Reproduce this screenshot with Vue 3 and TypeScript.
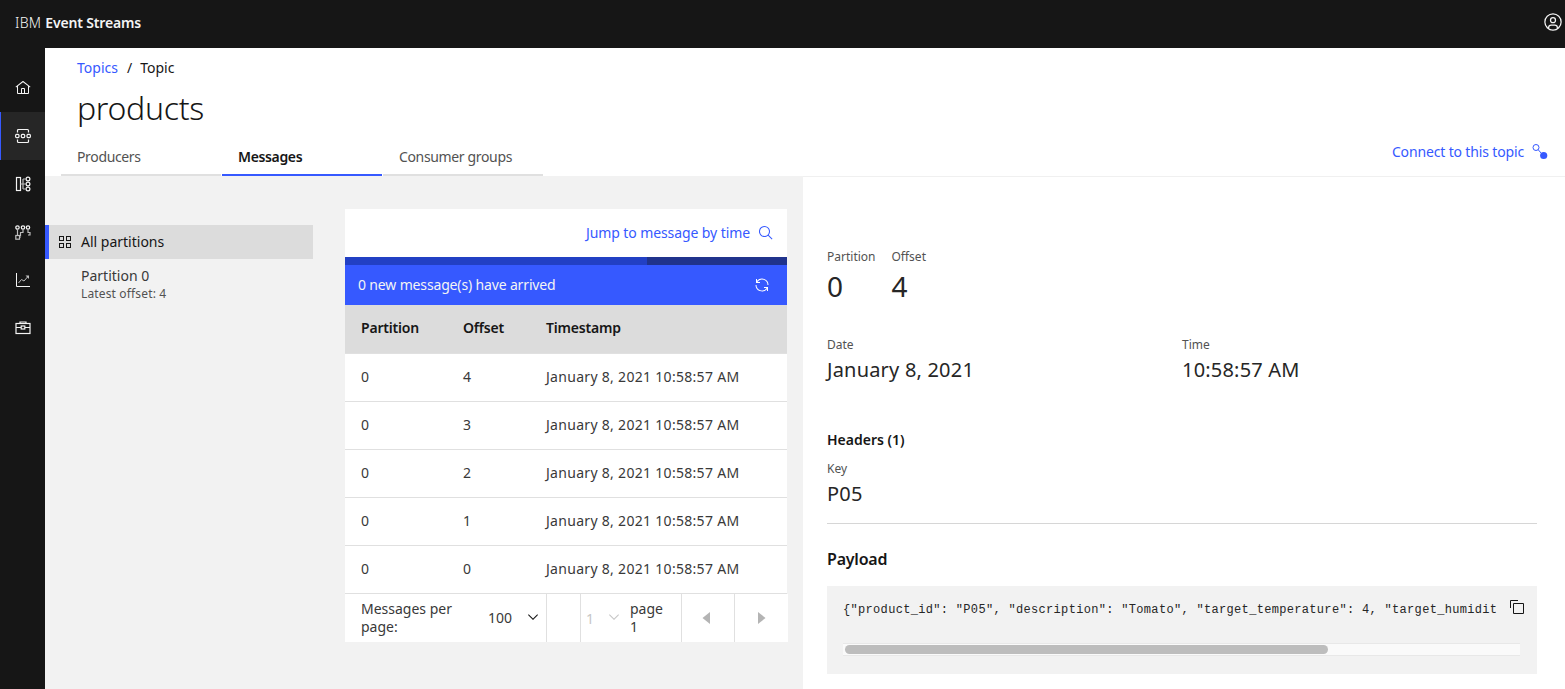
<template>
  <div class="app">
    <header class="topbar">
      <span class="brand">IBM <b>Event Streams</b></span>
      <svg class="user" viewBox="0 0 32 32" fill="currentColor">
        <path d="M16,8a5,5,0,1,0,5,5A5,5,0,0,0,16,8Zm0,8a3,3,0,1,1,3-3A3.0034,3.0034,0,0,1,16,16Z" />
        <path d="M16,2A14,14,0,1,0,30,16,14.0158,14.0158,0,0,0,16,2ZM10,26.3765V25a3.0033,3.0033,0,0,1,3-3h6a3.0033,3.0033,0,0,1,3,3v1.3765a11.8989,11.8989,0,0,1-12,0Zm13.9925-1.4507A5.0016,5.0016,0,0,0,19,20H13a5.0016,5.0016,0,0,0-4.9925,4.9258,12,12,0,1,1,15.985,0Z" />
      </svg>
    </header>

    <div class="shell">
      <nav class="sidenav">
        <a class="nav-item">
          <svg viewBox="0 0 32 32" fill="currentColor"><path d="M16.6123,2.2138a1.01,1.01,0,0,0-1.2427,0L1,13.4194l1.2427,1.5717L4,13.6209V26a2.0041,2.0041,0,0,0,2,2H26a2.0037,2.0037,0,0,0,2-2V13.63L29.7573,15,31,13.4282ZM18,26H14V18h4Zm2,0V18a2.0023,2.0023,0,0,0-2-2H14a2.002,2.002,0,0,0-2,2v8H6V12.0615l10-7.79,10,7.8005V26Z" /></svg>
        </a>
        <a class="nav-item active">
          <svg viewBox="0 0 16 16" fill="none" stroke="currentColor" stroke-width="1.2">
            <path d="M2.5 4.5V2.5a1 1 0 0 1 1-1h9a1 1 0 0 1 1 1v2M2.5 11.5v2a1 1 0 0 0 1 1h9a1 1 0 0 0 1-1v-2" />
            <rect x="0.6" y="6.4" width="3.4" height="3.2" rx="1" />
            <rect x="6.3" y="6.4" width="3.4" height="3.2" rx="1" />
            <rect x="12" y="6.4" width="3.4" height="3.2" rx="1" />
          </svg>
        </a>
        <a class="nav-item">
          <svg viewBox="0 0 16 16" fill="none" stroke="currentColor" stroke-width="1.2">
            <rect x="1.5" y="1.5" width="4" height="13" />
            <path d="M5.5 8h5M8 3h2.5M8 13h2.5M8 3v10" stroke="#bdbdbd" />
            <circle cx="13" cy="3" r="1.9" />
            <circle cx="13" cy="8" r="1.9" />
            <circle cx="13" cy="13" r="1.9" />
          </svg>
        </a>
        <a class="nav-item">
          <svg viewBox="0 -1 16 16" fill="none" stroke="currentColor" stroke-width="1.2">
            <circle cx="2.5" cy="2.5" r="1.7" />
            <circle cx="8" cy="2.5" r="1.7" />
            <circle cx="13" cy="2.5" r="1.7" />
            <rect x="0.8" y="10.5" width="3.7" height="3.7" stroke="#bdbdbd" />
            <path d="M2.5 4.5v6M8 4.5v3h-2.5v4M13 4.5v3h2v2.5h-2M4.5 12.5h1" stroke="#bdbdbd" />
          </svg>
        </a>
        <a class="nav-item">
          <svg viewBox="0 0 32 32" fill="currentColor">
            <path d="M4,2H2V28a2,2,0,0,0,2,2H30V28H4Z" />
            <path d="M7 22l6-7 5 3 7-8" fill="none" stroke="#bdbdbd" stroke-width="2" />
            <path d="M21 7h7v7z" fill="#bdbdbd" />
          </svg>
        </a>
        <a class="nav-item">
          <svg viewBox="0 0 16 16" fill="none" stroke="currentColor" stroke-width="1.2">
            <rect x="1" y="3.5" width="14" height="10" />
            <path d="M5 3.5V2h6v1.5M1 7.5h5M10 7.5h5" />
            <rect x="6.2" y="6" width="3.6" height="3" />
          </svg>
        </a>
      </nav>

      <div class="content">
        <section class="page-head">
          <div class="breadcrumb"><a>Topics</a><span class="slash">/</span><span>Topic</span></div>
          <h1>products</h1>
          <div class="tab-row">
            <div class="tabs">
              <span v-for="tab in tabs" :key="tab" class="tab" :class="{ selected: tab === 'Messages' }">{{ tab }}</span>
            </div>
            <a class="connect">
              Connect to this topic
              <svg viewBox="0 0 16 16" fill="#3659ff">
                <circle cx="4" cy="3.5" r="3" fill="none" stroke="#3659ff" />
                <path d="M6 5.5l3.5 4" stroke="#3659ff" />
                <circle cx="11.7" cy="11.5" r="3.6" />
              </svg>
            </a>
          </div>
        </section>

        <div class="work">
          <div class="browser">
            <aside class="partitions">
              <div class="part selected">
                <svg viewBox="0 0 14 14" fill="none" stroke="#161616">
                  <rect x="1.5" y="1.5" width="4" height="4" />
                  <rect x="8.5" y="1.5" width="4" height="4" />
                  <rect x="1.5" y="8.5" width="4" height="4" />
                  <rect x="8.5" y="8.5" width="4" height="4" />
                </svg>
                <span>All partitions</span>
              </div>
              <div class="part-plain">
                <div>Partition 0</div>
                <small>Latest offset: 4</small>
              </div>
            </aside>

            <div class="messages">
              <div class="jump">
                <a>Jump to message by time</a>
                <svg viewBox="0 0 32 32" fill="#3659ff"><path d="M29,27.5859l-7.5521-7.5521a11.0177,11.0177,0,1,0-1.4141,1.4141L27.5859,29ZM4,13a9,9,0,1,1,9,9A9.01,9.01,0,0,1,4,13Z" /></svg>
              </div>
              <div class="progress"><div class="progress-rest"></div></div>
              <div class="banner">
                <span>0 new message(s) have arrived</span>
                <svg viewBox="0 0 32 32" fill="#fff"><path d="M12 10H6.78A11 11 0 0 1 27 16h2A13 13 0 0 0 6 7.68V4H4v8h8zM20 22h5.22A11 11 0 0 1 5 16H3a13 13 0 0 0 23 8.32V28h2V20H20z" /></svg>
              </div>
              <div class="row head"><span>Partition</span><span>Offset</span><span>Timestamp</span></div>
              <div v-for="offset in offsets" :key="offset" class="row">
                <span>0</span><span>{{ offset }}</span><span class="stamp">January 8, 2021 10:58:57 AM</span>
              </div>
              <div class="pager">
                <div class="per-page">
                  <span class="per-label">Messages per page:</span>
                  <span class="per-value">100</span>
                  <svg class="chev" viewBox="0 0 32 32" fill="#161616"><path d="M16 22L6 12 7.4 10.6 16 19.2 24.6 10.6 26 12z" /></svg>
                </div>
                <div class="pager-gap"></div>
                <div class="page-pick">
                  <span class="page-num">1</span>
                  <svg class="chev" viewBox="0 0 32 32" fill="#c6c6c6"><path d="M16 22L6 12 7.4 10.6 16 19.2 24.6 10.6 26 12z" /></svg>
                  <span class="page-label">page 1</span>
                </div>
                <button class="pager-btn"><svg viewBox="0 0 32 32" fill="#b4b4b4"><path d="M20 24L10 16 20 8z" /></svg></button>
                <button class="pager-btn"><svg viewBox="0 0 32 32" fill="#b4b4b4"><path d="M12 8L22 16 12 24z" /></svg></button>
              </div>
            </div>
          </div>

          <aside class="detail">
            <div class="pair first">
              <div class="field"><label>Partition</label><div class="big">0</div></div>
              <div class="field"><label>Offset</label><div class="big">4</div></div>
            </div>
            <div class="date-grid">
              <div class="field"><label>Date</label><div class="mid">January 8, 2021</div></div>
              <div class="field"><label>Time</label><div class="mid">10:58:57 AM</div></div>
            </div>
            <h4>Headers (1)</h4>
            <div class="field key"><label>Key</label><div class="mid">P05</div></div>
            <hr />
            <h3>Payload</h3>
            <div class="code">
              <pre>{{ payload }}</pre>
              <svg class="copy" viewBox="0 0 32 32" fill="#161616">
                <path d="M28,10V28H10V10H28m0-2H10a2,2,0,0,0-2,2V28a2,2,0,0,0,2,2H28a2,2,0,0,0,2-2V10a2,2,0,0,0-2-2Z" />
                <path d="M4,18H2V4A2,2,0,0,1,4,2H18V4H4Z" />
              </svg>
              <div class="scroll"><div class="thumb"></div></div>
            </div>
          </aside>
        </div>
      </div>
    </div>
  </div>
</template>

<script setup lang="ts">
const tabs: string[] = ['Producers', 'Messages', 'Consumer groups']
const offsets: number[] = [4, 3, 2, 1, 0]
const payload = '{"product_id": "P05", "description": "Tomato", "target_temperature": 4, "target_humidit'
</script>

<style>
html,
body {
  margin: 0;
  overflow: hidden;
}
</style>

<style scoped>
.app {
  width: 1565px;
  height: 689px;
  display: flex;
  flex-direction: column;
  font-family: "Noto Sans", "Liberation Sans", sans-serif;
  font-size: 14px;
  color: #161616;
  overflow: hidden;
}

/* === Top bar === */
.topbar {
  height: 48px;
  flex: none;
  background: #161616;
  color: #f4f4f4;
  display: flex;
  align-items: center;
  justify-content: space-between;
  padding: 0 2px 4px 15px;
  box-sizing: border-box;
}

.brand {
  font-weight: 300;
  letter-spacing: 0.3px;
}

.brand b {
  font-weight: 600;
  letter-spacing: -0.15px;
}

.user {
  width: 20px;
  height: 20px;
}

.shell {
  flex: 1;
  display: flex;
  min-height: 0;
}

/* === Side nav === */
.sidenav {
  width: 45px;
  flex: none;
  background: #161616;
  padding-top: 16px;
  box-sizing: border-box;
}

.nav-item {
  height: 48px;
  display: flex;
  align-items: center;
  justify-content: center;
  color: #f4f4f4;
  box-sizing: border-box;
}

.nav-item svg {
  width: 16px;
  height: 16px;
}

.nav-item.active {
  background: #262626;
  border-left: 1px solid #3659ff;
  padding-right: 1px;
}

/* === Page head === */
.content {
  flex: 1;
  display: flex;
  flex-direction: column;
  min-width: 0;
}

.page-head {
  height: 128px;
  flex: none;
  display: flex;
  flex-direction: column;
  background: #fff;
  box-sizing: border-box;
  padding-top: 12px;
}

.breadcrumb {
  margin-left: 32px;
  line-height: 16px;
  display: flex;
}

.breadcrumb a {
  color: #3659ff;
}

.slash {
  margin: 0 8px 0 9px;
}

h1 {
  margin: 12px 0 0 32px;
  font-size: 32px;
  font-weight: 300;
  line-height: 40px;
  letter-spacing: -0.3px;
}

.tab-row {
  margin-top: auto;
  display: flex;
  justify-content: space-between;
  align-items: flex-end;
  padding: 0 17px 0 16px;
}

.tabs {
  display: flex;
}

.tab {
  width: 160px;
  height: 40px;
  padding: 12px 16px 0;
  box-sizing: border-box;
  color: #525252;
  border-bottom: 2px solid #e0e0e0;
  line-height: 18px;
  letter-spacing: -0.35px;
}

.tab + .tab {
  margin-left: 1px;
}

.tab.selected {
  color: #161616;
  font-weight: 600;
  letter-spacing: -0.35px;
  border-bottom-color: #3659ff;
}

.connect {
  display: flex;
  align-items: center;
  gap: 8px;
  color: #3659ff;
  line-height: 18px;
  padding-bottom: 15px;
  letter-spacing: -0.15px;
}

.connect svg {
  width: 16px;
  height: 16px;
}

/* === Work area === */
.work {
  flex: 1;
  display: flex;
  min-height: 0;
}

.browser {
  width: 758px;
  flex: none;
  background: #f2f2f2;
  display: flex;
  padding-top: 33px;
  box-sizing: border-box;
  align-items: flex-start;
}

.partitions {
  width: 268px;
  flex: none;
  margin-top: 16px;
  margin-right: 32px;
}

.part {
  height: 34px;
  background: #dcdcdc;
  border-left: 4px solid #3659ff;
  box-sizing: border-box;
  display: flex;
  align-items: center;
  gap: 9px;
  padding-left: 9px;
}

.part span {
  margin-bottom: 2px;
}

.part svg {
  width: 14px;
  height: 14px;
}

.part-plain {
  padding: 8px 0 0 36px;
  color: #393939;
  line-height: 18px;
}

.part-plain small {
  display: block;
  font-size: 12px;
  line-height: 18px;
  letter-spacing: 0.15px;
  color: #525252;
}

/* === Messages table === */
.messages {
  width: 442px;
  flex: none;
  background: #fff;
}

.jump {
  height: 48px;
  display: flex;
  align-items: center;
  justify-content: flex-end;
  gap: 8px;
  padding-right: 13px;
  color: #3659ff;
  letter-spacing: -0.09px;
}

.jump a {
  margin-bottom: 2px;
}

.jump svg {
  width: 16px;
  height: 16px;
}

.progress {
  height: 8px;
  background: #2240c4;
  display: flex;
  justify-content: flex-end;
}

.progress-rest {
  width: 140px;
  background: #20338c;
}

.banner {
  height: 40px;
  background: #3659ff;
  color: #f4f4f4;
  display: flex;
  align-items: center;
  justify-content: space-between;
  padding: 0 17px 0 13px;
  letter-spacing: -0.15px;
}

.banner span {
  margin-bottom: 2px;
}

.banner svg {
  width: 16px;
  height: 16px;
}

.row {
  height: 48px;
  display: grid;
  grid-template-columns: 102px 83px 1fr;
  align-items: center;
  padding: 0 0 2px 16px;
  box-sizing: border-box;
  border-top: 1px solid #e0e0e0;
  color: #393939;
}

.stamp {
  letter-spacing: 0.3px;
}

.row.head {
  background: #dcdcdc;
  color: #161616;
  font-weight: 600;
  letter-spacing: -0.2px;
  border-top: 0;
  padding-bottom: 4px;
}

.pager {
  height: 49px;
  display: flex;
  color: #393939;
  border-top: 1px solid #e0e0e0;
  box-sizing: border-box;
}

.per-page {
  width: 202px;
  flex: none;
  display: flex;
  align-items: center;
  padding-left: 16px;
  box-sizing: border-box;
  border-right: 1px solid #e0e0e0;
}

.per-label {
  width: 127px;
  line-height: 18px;
}

.per-value {
  width: 37px;
  margin-bottom: 2px;
}

.chev {
  width: 16px;
  height: 16px;
  flex: none;
  margin-bottom: 2px;
}

.pager-gap {
  width: 33px;
  flex: none;
  border-right: 1px solid #e0e0e0;
}

.page-pick {
  width: 101px;
  flex: none;
  display: flex;
  align-items: center;
  padding-left: 5px;
  box-sizing: border-box;
  border-right: 1px solid #e0e0e0;
}

.page-num {
  width: 20px;
  color: #c6c6c6;
}

.page-label {
  width: 44px;
  margin-left: 8px;
  line-height: 18px;
}

.pager-btn {
  width: 53px;
  flex: none;
  padding: 0 2px 0 0;
  border: 0;
  background: #fff;
  display: flex;
  align-items: center;
  justify-content: center;
  border-right: 1px solid #e0e0e0;
}

.pager-btn:last-child {
  border-right: 0;
}

.pager-btn svg {
  width: 24px;
  height: 24px;
}

/* === Detail panel === */
.detail {
  flex: 1;
  background: #fff;
  border-top: 1px solid #f0f0f0;
  padding: 72px 28px 0 24px;
  min-width: 0;
}

.pair {
  display: flex;
  gap: 16px;
}

.field label {
  display: block;
  font-size: 12px;
  line-height: 16px;
  color: #525252;
}

.big {
  font-size: 28px;
  line-height: 36px;
  margin-top: 3px;
  color: #262626;
}

.mid {
  font-size: 20px;
  line-height: 26px;
  margin-top: 4px;
  letter-spacing: 0.2px;
  color: #262626;
}

.date-grid {
  display: grid;
  grid-template-columns: 355px 1fr;
  margin-top: 33px;
}

h4 {
  margin: 48px 0 0;
  font-size: 14px;
  font-weight: 600;
  line-height: 18px;
}

.key {
  margin-top: 12px;
}

hr {
  height: 1px;
  border: 0;
  background: #d6d6d6;
  margin: 16px 0 0;
}

h3 {
  margin: 24px 0 0;
  font-size: 16px;
  font-weight: 600;
  line-height: 22px;
  letter-spacing: -0.2px;
}

.code {
  position: relative;
  height: 88px;
  margin-top: 16px;
  background: #f2f2f2;
  padding: 16px 16px 0;
  box-sizing: border-box;
}

.code pre {
  margin: 0;
  font-family: "Liberation Mono", monospace;
  font-size: 12px;
  letter-spacing: 0.32px;
  line-height: 16px;
  color: #262626;
  overflow: hidden;
  white-space: pre;
}

.copy {
  position: absolute;
  top: 13px;
  right: 12px;
  width: 16px;
  height: 16px;
}

.scroll {
  position: absolute;
  left: 16px;
  right: 17px;
  top: 57px;
  height: 13px;
  background: #fafafa;
  border-top: 1px solid #e8e8e8;
  border-bottom: 1px solid #e8e8e8;
  box-sizing: border-box;
}

.thumb {
  width: 483px;
  height: 9px;
  margin: 1px 0 0 2px;
  border-radius: 5px;
  background: #bdbdbd;
}
</style>
